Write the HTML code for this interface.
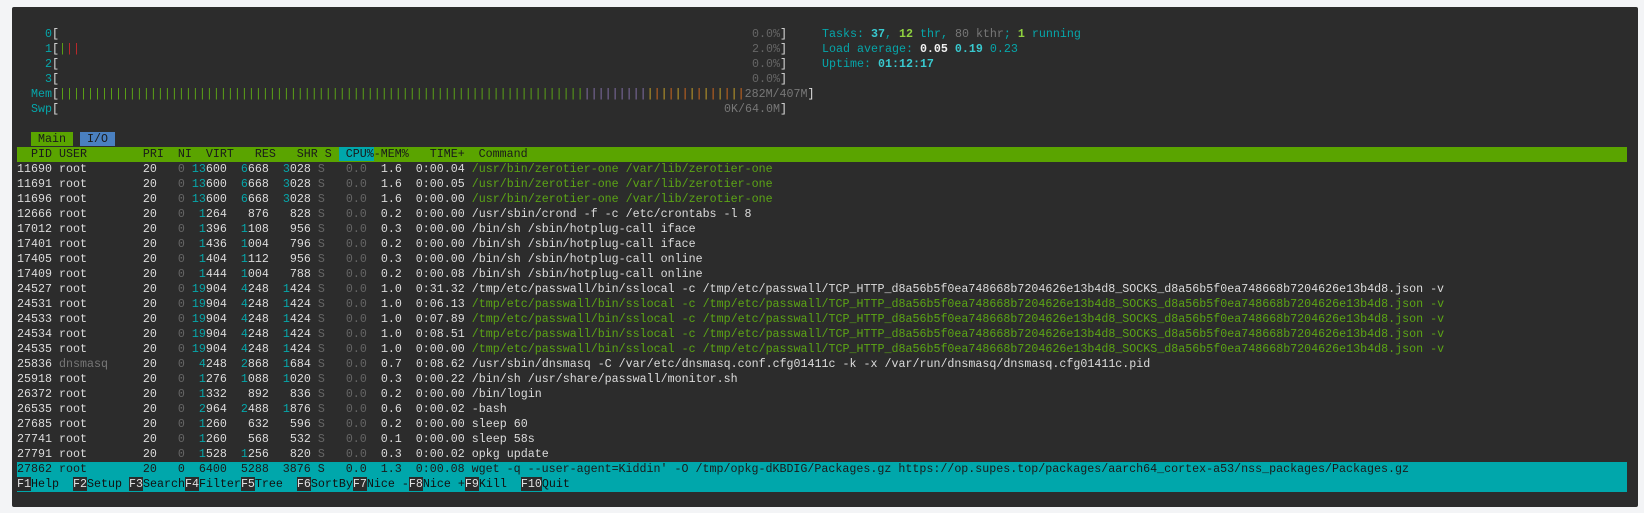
<!DOCTYPE html>
<html><head><meta charset="utf-8"><style>
html,body{margin:0;padding:0;background:#f3f4f6;width:1644px;height:513px;overflow:hidden}
.panel{position:absolute;left:12px;top:7px;width:1626px;height:500px;background:#2c2c2c;border-radius:2px}
.t{position:absolute;left:17px;top:27px;font-family:"Liberation Mono",monospace;font-size:11.667px;color:#dcdcdc}
.l{height:15px;line-height:15px;white-space:pre;position:relative;width:1610px}
.c{color:#06a6aa}.g{color:#5ca516}.d{color:#666}.w{color:#e8e8e8}
.bc{color:#39c9cf;font-weight:bold}.bg{color:#8fd13f;font-weight:bold}.bw{color:#f0f0f0;font-weight:bold}
.a{position:absolute;top:0}
.hdr{background:#5aa400;color:#1a1a1a}
.cy{background:#00a7ab}
.sel{background:#00a7ab;color:#1a1a1a}
.fk{color:#e0e0e0;background:#2c2c2c}
.fl{color:#111;background:#00a7ab}
.gb{color:#5ca516}.pb{color:#8470a8}.y1{color:#c9a227}.y2{color:#d2691e}.r{color:#c0282a}
</style></head><body>
<div class="panel"></div>
<div class="t">
<div class="l"><span class="c">    0</span>[<span class="a d" style="left:42px;width:721px;text-align:right">0.0%</span><span class="a" style="left:763px">]</span><span class="a" style="left:805px"><span class="c">Tasks: </span><span class="bc">37</span><span class="c">, </span><span class="bg">12</span><span class="c"> thr, </span><span class="d" style="color:#777">80 kthr</span><span class="c">; </span><span class="bg">1</span><span class="c"> running</span></span></div>
<div class="l"><span class="c">    1</span>[<span class="gb">|</span><span class="r">||</span><span class="a d" style="left:42px;width:721px;text-align:right">2.0%</span><span class="a" style="left:763px">]</span><span class="a" style="left:805px"><span class="c">Load average: </span><span class="bw">0.05 </span><span class="bc">0.19 </span><span class="c">0.23</span></span></div>
<div class="l"><span class="c">    2</span>[<span class="a d" style="left:42px;width:721px;text-align:right">0.0%</span><span class="a" style="left:763px">]</span><span class="a" style="left:805px"><span class="c">Uptime: </span><span class="bc">01:12:17</span></span></div>
<div class="l"><span class="c">    3</span>[<span class="a d" style="left:42px;width:721px;text-align:right">0.0%</span><span class="a" style="left:763px">]</span></div>
<div class="l"><span class="c">  Mem</span>[<span class="gb">|||||||||||||||||||||||||||||||||||||||||||||||||||||||||||||||||||||||||||</span><span class="pb">|||||||||</span><span class="y1">|</span><span class="y2">|</span><span class="y1">|</span><span class="y2">|</span><span class="y1">|</span><span class="y2">|</span><span class="y1">|</span><span class="y2">|</span><span class="y1">|</span><span class="y2">|</span><span class="y1">|</span><span class="y2">|</span><span class="y1">|</span><span class="y2">|</span><span class="d" style="color:#777">282M/407M</span>]</div>
<div class="l"><span class="c">  Swp</span>[<span class="a" style="left:42px;width:721px;text-align:right;color:#777">0K/64.0M</span><span class="a" style="left:763px">]</span></div>
<div class="l"> </div>
<div class="l">  <span style="background:#5aa400;color:#1a1a1a"> Main </span> <span style="background:#4a80c0;color:#1a1a1a"> I/O </span></div>
<div class="l hdr">  PID USER        PRI  NI  VIRT   RES   SHR S <span class="cy"> CPU%</span>-MEM%   TIME+  Command</div>
<div class="l">11690 root        20   <span class="d">0</span> <span class="c">13</span>600  <span class="c">6</span>668  <span class="c">3</span>028 <span class="d">S</span>   <span class="d">0.0</span>  1.6  0:00.04 <span class="g">/usr/bin/zerotier-one /var/lib/zerotier-one</span></div>
<div class="l">11691 root        20   <span class="d">0</span> <span class="c">13</span>600  <span class="c">6</span>668  <span class="c">3</span>028 <span class="d">S</span>   <span class="d">0.0</span>  1.6  0:00.05 <span class="g">/usr/bin/zerotier-one /var/lib/zerotier-one</span></div>
<div class="l">11696 root        20   <span class="d">0</span> <span class="c">13</span>600  <span class="c">6</span>668  <span class="c">3</span>028 <span class="d">S</span>   <span class="d">0.0</span>  1.6  0:00.00 <span class="g">/usr/bin/zerotier-one /var/lib/zerotier-one</span></div>
<div class="l">12666 root        20   <span class="d">0</span>  <span class="c">1</span>264   876   828 <span class="d">S</span>   <span class="d">0.0</span>  0.2  0:00.00 /usr/sbin/crond -f -c /etc/crontabs -l 8</div>
<div class="l">17012 root        20   <span class="d">0</span>  <span class="c">1</span>396  <span class="c">1</span>108   956 <span class="d">S</span>   <span class="d">0.0</span>  0.3  0:00.00 /bin/sh /sbin/hotplug-call iface</div>
<div class="l">17401 root        20   <span class="d">0</span>  <span class="c">1</span>436  <span class="c">1</span>004   796 <span class="d">S</span>   <span class="d">0.0</span>  0.2  0:00.00 /bin/sh /sbin/hotplug-call iface</div>
<div class="l">17405 root        20   <span class="d">0</span>  <span class="c">1</span>404  <span class="c">1</span>112   956 <span class="d">S</span>   <span class="d">0.0</span>  0.3  0:00.00 /bin/sh /sbin/hotplug-call online</div>
<div class="l">17409 root        20   <span class="d">0</span>  <span class="c">1</span>444  <span class="c">1</span>004   788 <span class="d">S</span>   <span class="d">0.0</span>  0.2  0:00.08 /bin/sh /sbin/hotplug-call online</div>
<div class="l">24527 root        20   <span class="d">0</span> <span class="c">19</span>904  <span class="c">4</span>248  <span class="c">1</span>424 <span class="d">S</span>   <span class="d">0.0</span>  1.0  0:31.32 /tmp/etc/passwall/bin/sslocal -c /tmp/etc/passwall/TCP_HTTP_d8a56b5f0ea748668b7204626e13b4d8_SOCKS_d8a56b5f0ea748668b7204626e13b4d8.json -v</div>
<div class="l">24531 root        20   <span class="d">0</span> <span class="c">19</span>904  <span class="c">4</span>248  <span class="c">1</span>424 <span class="d">S</span>   <span class="d">0.0</span>  1.0  0:06.13 <span class="g">/tmp/etc/passwall/bin/sslocal -c /tmp/etc/passwall/TCP_HTTP_d8a56b5f0ea748668b7204626e13b4d8_SOCKS_d8a56b5f0ea748668b7204626e13b4d8.json -v</span></div>
<div class="l">24533 root        20   <span class="d">0</span> <span class="c">19</span>904  <span class="c">4</span>248  <span class="c">1</span>424 <span class="d">S</span>   <span class="d">0.0</span>  1.0  0:07.89 <span class="g">/tmp/etc/passwall/bin/sslocal -c /tmp/etc/passwall/TCP_HTTP_d8a56b5f0ea748668b7204626e13b4d8_SOCKS_d8a56b5f0ea748668b7204626e13b4d8.json -v</span></div>
<div class="l">24534 root        20   <span class="d">0</span> <span class="c">19</span>904  <span class="c">4</span>248  <span class="c">1</span>424 <span class="d">S</span>   <span class="d">0.0</span>  1.0  0:08.51 <span class="g">/tmp/etc/passwall/bin/sslocal -c /tmp/etc/passwall/TCP_HTTP_d8a56b5f0ea748668b7204626e13b4d8_SOCKS_d8a56b5f0ea748668b7204626e13b4d8.json -v</span></div>
<div class="l">24535 root        20   <span class="d">0</span> <span class="c">19</span>904  <span class="c">4</span>248  <span class="c">1</span>424 <span class="d">S</span>   <span class="d">0.0</span>  1.0  0:00.00 <span class="g">/tmp/etc/passwall/bin/sslocal -c /tmp/etc/passwall/TCP_HTTP_d8a56b5f0ea748668b7204626e13b4d8_SOCKS_d8a56b5f0ea748668b7204626e13b4d8.json -v</span></div>
<div class="l">25836 <span class="d" style="color:#777">dnsmasq</span>     20   <span class="d">0</span>  <span class="c">4</span>248  <span class="c">2</span>868  <span class="c">1</span>684 <span class="d">S</span>   <span class="d">0.0</span>  0.7  0:08.62 /usr/sbin/dnsmasq -C /var/etc/dnsmasq.conf.cfg01411c -k -x /var/run/dnsmasq/dnsmasq.cfg01411c.pid</div>
<div class="l">25918 root        20   <span class="d">0</span>  <span class="c">1</span>276  <span class="c">1</span>088  <span class="c">1</span>020 <span class="d">S</span>   <span class="d">0.0</span>  0.3  0:00.22 /bin/sh /usr/share/passwall/monitor.sh</div>
<div class="l">26372 root        20   <span class="d">0</span>  <span class="c">1</span>332   892   836 <span class="d">S</span>   <span class="d">0.0</span>  0.2  0:00.00 /bin/login</div>
<div class="l">26535 root        20   <span class="d">0</span>  <span class="c">2</span>964  <span class="c">2</span>488  <span class="c">1</span>876 <span class="d">S</span>   <span class="d">0.0</span>  0.6  0:00.02 -bash</div>
<div class="l">27685 root        20   <span class="d">0</span>  <span class="c">1</span>260   632   596 <span class="d">S</span>   <span class="d">0.0</span>  0.2  0:00.00 sleep 60</div>
<div class="l">27741 root        20   <span class="d">0</span>  <span class="c">1</span>260   568   532 <span class="d">S</span>   <span class="d">0.0</span>  0.1  0:00.00 sleep 58s</div>
<div class="l">27791 root        20   <span class="d">0</span>  <span class="c">1</span>528  <span class="c">1</span>256   820 <span class="d">S</span>   <span class="d">0.0</span>  0.3  0:00.02 opkg update</div>
<div class="l sel">27862 root        20   0  6400  5288  3876 S   0.0  1.3  0:00.08 wget -q --user-agent=Kiddin' -O /tmp/opkg-dKBDIG/Packages.gz https://op.supes.top/packages/aarch64_cortex-a53/nss_packages/Packages.gz</div>
<div class="l" style="background:#00a7ab"><span class="fk">F1</span><span class="fl">Help  </span><span class="fk">F2</span><span class="fl">Setup </span><span class="fk">F3</span><span class="fl">Search</span><span class="fk">F4</span><span class="fl">Filter</span><span class="fk">F5</span><span class="fl">Tree  </span><span class="fk">F6</span><span class="fl">SortBy</span><span class="fk">F7</span><span class="fl">Nice -</span><span class="fk">F8</span><span class="fl">Nice +</span><span class="fk">F9</span><span class="fl">Kill  </span><span class="fk">F10</span><span class="fl">Quit  </span></div>
</div>
</body></html>
